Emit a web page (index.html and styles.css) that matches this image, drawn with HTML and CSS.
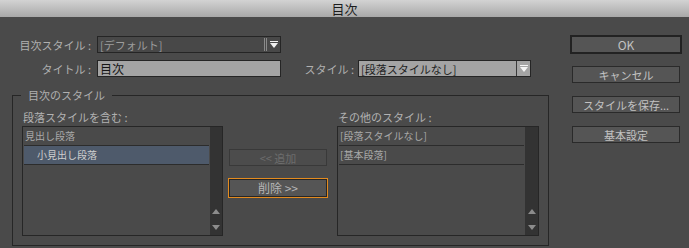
FILE: index.html
```html
<!DOCTYPE html>
<html lang="ja">
<head>
<meta charset="utf-8">
<title>目次</title>
<link rel="stylesheet" href="styles.css">
</head>
<body>
<div class="window">
  <header class="titlebar">目次</header>
  <div class="body">
    <main class="left">
      <div class="row row1">
        <label class="lbl">目次スタイル :</label>
        <div class="select dark">
          <span class="val">[デフォルト]</span>
          <span class="sep"></span>
          <svg class="arrow" width="8" height="7" viewBox="0 0 8 7"><rect x="0" y="0" width="8" height="1" fill="#f0f0f0"/><polygon points="0,2 8,2 4,7" fill="#f0f0f0"/></svg>
        </div>
      </div>
      <div class="row row2">
        <label class="lbl">タイトル :</label>
        <div class="input">目次</div>
        <label class="lbl lbl2">スタイル :</label>
        <div class="select light">
          <span class="val">[段落スタイルなし]</span>
          <span class="sep"></span>
          <svg class="arrow" width="8" height="7" viewBox="0 0 8 7"><rect x="0" y="0" width="8" height="1" fill="#f4f4f4"/><polygon points="0,2 8,2 4,7" fill="#f4f4f4"/></svg>
        </div>
      </div>
      <fieldset class="group">
        <legend>目次のスタイル</legend>
        <div class="cols">
          <div class="col col-left">
            <div class="cap">段落スタイルを含む :</div>
            <div class="list">
              <ul class="items">
                <li>見出し段落</li>
                <li class="sel">小見出し段落</li>
              </ul>
              <div class="scroll">
                <svg width="8" height="5" viewBox="0 0 8 5"><polygon points="4,0 8,5 0,5" fill="#8c8c8c"/></svg>
                <svg width="8" height="5" viewBox="0 0 8 5"><polygon points="0,0 8,0 4,5" fill="#8c8c8c"/></svg>
              </div>
            </div>
          </div>
          <div class="mid">
            <div class="btn disabled">&lt;&lt; 追加</div>
            <div class="btn focus">削除 &gt;&gt;</div>
          </div>
          <div class="col col-right">
            <div class="cap">その他のスタイル :</div>
            <div class="list">
              <ul class="items">
                <li>[段落スタイルなし]</li>
                <li>[基本段落]</li>
              </ul>
              <div class="scroll">
                <svg width="8" height="5" viewBox="0 0 8 5"><polygon points="4,0 8,5 0,5" fill="#8c8c8c"/></svg>
                <svg width="8" height="5" viewBox="0 0 8 5"><polygon points="0,0 8,0 4,5" fill="#8c8c8c"/></svg>
              </div>
            </div>
          </div>
        </div>
      </fieldset>
    </main>
    <aside class="actions">
      <div class="btn default">OK</div>
      <div class="btn">キャンセル</div>
      <div class="btn">スタイルを保存...</div>
      <div class="btn">基本設定</div>
    </aside>
  </div>
</div>
</body>
</html>
```
FILE: styles.css
```css
* { box-sizing: border-box; }
html, body {
  margin: 0;
  padding: 0;
  width: 689px;
  height: 248px;
  overflow: hidden;
  background: #4a4a4a;
}
body {
  font-family: "Noto Sans CJK JP", "Noto Sans", sans-serif;
  font-size: 11px;
  line-height: 14px;
  color: #b2b2b2;
}
.window { width: 689px; height: 248px; }
.titlebar {
  height: 17px;
  background: linear-gradient(#d3d3d3, #a8a8a8);
  color: #1c1c1c;
  font-size: 13px;
  line-height: 17px;
  text-align: center;
  padding-left: 0;
}
.body { display: flex; }
.left { width: 560px; }
.row { display: flex; align-items: center; height: 17px; }
.row1 { margin-top: 19px; }
.row2 { margin-top: 7px; }
.lbl {
  width: 91px;
  margin-right: 6px;
  text-align: right;
  color: #b0b0b0;
  white-space: nowrap;
}
.lbl2 { width: 52px; margin-left: 21px; margin-right: 4px; }
.select, .input {
  height: 17px;
  border: 1px solid #252525;
  display: flex;
  align-items: center;
  padding-left: 2px;
  white-space: nowrap;
}
.select.dark { width: 184px; background: #484848; color: #9d9d9d; }
.select.light { width: 173px; background: #a4a4a4; color: #1e1e1e; }
.input { width: 184px; background: #a4a4a4; color: #161616; font-size: 12px; }
.select .val { flex: 1; }
.select.dark .sep {
  width: 3px; height: 13px;
  border-left: 1px solid #8a8a8a;
  border-right: 1px solid #8a8a8a;
  margin-right: 3px;
}
.select.light .sep {
  width: 1px; height: 15px;
  background: #3a3a3a;
  margin-right: 3px;
}
.select .arrow { margin-right: 2px; }

.group {
  margin: 11px 0 0 12px;
  width: 537px;
  padding: 0 8px 9px 9px;
  border: 1px solid #262626;
}
.group legend {
  margin-left: -1px;
  padding: 0 7px;
  color: #b0b0b0;
  font-size: 11px;
  line-height: 14px;
}
.cols { display: flex; }
.cap { margin-top: 8px; height: 14px; color: #b2b2b2; white-space: nowrap; }
.col-left { width: 201px; }
.col-left .cap { padding-left: 1px; }
.col-right { width: 202px; }
.col-right .cap { padding-left: 1px; }
.list {
  margin-top: 2px;
  height: 110px;
  border: 1px solid #262626;
  background: #4a4a4a;
  display: flex;
}
.items {
  flex: 1;
  list-style: none;
  margin: 0;
  padding: 0 1px;
}
.items li {
  height: 19px;
  line-height: 18px;
  border-bottom: 1px solid #2c2c2c;
  padding-left: 1px;
  color: #a9a9a9;
  font-size: 10px;
  white-space: nowrap;
}
.items li.sel {
  background: #4e5a6b;
  color: #cfcfcf;
  padding-left: 13px;
}
.col-left .scroll { width: 12px; }
.col-right .scroll { width: 13px; }
.scroll {
  background: #333333;
  display: flex;
  flex-direction: column;
  justify-content: flex-end;
  align-items: center;
  gap: 11px;
  padding-bottom: 5px;
}
.scroll svg { display: block; }

.mid {
  width: 114px;
  display: flex;
  flex-direction: column;
  padding-left: 5px;
}
.btn {
  display: flex;
  align-items: center;
  justify-content: center;
  white-space: nowrap;
}
.mid .btn.disabled {
  margin-top: 47px;
  margin-left: 1px;
  width: 98px;
  height: 17px;
  background: #4c4c4c;
  border: 1px solid #393939;
  color: #6d6d6d;
}
.mid .btn.focus {
  margin-top: 12px;
  width: 100px;
  height: 20px;
  background: #555555;
  border: 1px solid #e38b1f;
  box-shadow: inset 0 0 0 1px #262626;
  color: #b6b6b6;
  font-size: 12px;
}

.actions {
  margin-left: 10px;
  margin-top: 18px;
  display: flex;
  flex-direction: column;
}
.actions .btn {
  width: 108px;
  height: 17px;
  margin-left: 2px;
  margin-top: 13px;
  background: #555555;
  border: 1px solid #2a2a2a;
  color: #c2c2c2;
}
.actions .btn.default {
  width: 112px;
  height: 19px;
  margin-left: 0;
  margin-top: 0;
  border: 2px solid #222222;
  font-size: 12px;
}
.actions .btn:nth-child(2) { margin-top: 12px; }
```
